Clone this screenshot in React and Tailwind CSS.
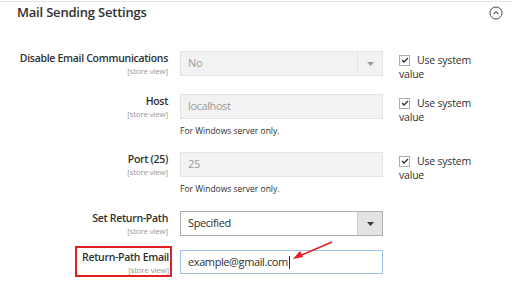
const font = "font-['Open_Sans',sans-serif]";

function Label({ title, boxed }) {
  return (
    <div className="w-[168px] shrink-0 flex justify-end">
      <div
        className={
          boxed
            ? "flex flex-col items-end border-2 border-[#e02020] pl-[5px] pr-[1px] pt-[2px] -mt-[4px] -mr-[4px] h-[31px]"
            : "flex flex-col items-end"
        }
      >
        <div className="text-[10.5px] leading-[14px] tracking-[-0.3px] font-semibold text-[#303030]">{title}</div>
        <div className="text-[8px] leading-[11px] tracking-[-0.2px] text-[#999]">[store view]</div>
      </div>
    </div>
  );
}

function Check() {
  return (
    <div className="ml-[16px] w-[110px] h-[25px] text-[10.5px] leading-[14px] tracking-[-0.2px] text-[#303030] pt-[2px]">
      <div className="flex items-center">
        <span className="w-[11px] h-[11px] border border-[#adadad] bg-white flex items-center justify-center mr-[7px]">
          <svg width="8" height="6" viewBox="0 0 8 6">
            <path d="M1 3l2 2 4-4" stroke="#303030" strokeWidth="1.3" fill="none" />
          </svg>
        </span>
        Use system
      </div>
      <div>value</div>
    </div>
  );
}

function Arrow({ dark }) {
  return (
    <div
      className={`w-[25px] self-stretch flex items-center justify-center border-l ${
        dark ? "bg-[#e3e3e3] border-[#cfcfcf]" : "border-[#e3e3e3]"
      }`}
    >
      <svg width="7" height="4" viewBox="0 0 7 4">
        <path d="M0 0h7L3.5 4z" fill={dark ? "#41362f" : "#9a9a9a"} />
      </svg>
    </div>
  );
}

export default function App() {
  return (
    <div className={`w-[512px] h-[290px] bg-white overflow-hidden ${font}`}>
      <div className="border-t border-[#e3e3e3] mt-[1px] flex items-center justify-between pl-[17px] pr-[9px] h-[22px]">
        <div className="text-[13px] tracking-[-0.2px] font-semibold text-[#303030]">Mail Sending Settings</div>
        <svg width="14" height="14" viewBox="0 0 14 14">
          <circle cx="7" cy="7" r="6" stroke="#514943" strokeWidth="1" fill="none" />
          <path d="M4.5 8.2L7 5.7l2.5 2.5" stroke="#514943" strokeWidth="1.1" fill="none" />
        </svg>
      </div>

      {/* Disable Email Communications */}
      <div className="flex items-start h-[25px] mt-[28px]">
        <Label title="Disable Email Communications" />
        <div className="ml-[12px] w-[203px] h-[25px] flex items-center bg-[#f2f2f2] border border-[#e3e3e3]">
          <div className="flex-1 pl-[7px] text-[11px] tracking-[-0.4px] text-[#9a9a9a]">No</div>
          <Arrow />
        </div>
        <Check />
      </div>

      {/* Host */}
      <div className="flex items-start h-[43px] mt-[18px]">
        <Label title="Host" />
        <div className="ml-[12px] w-[203px]">
          <div className="h-[25px] flex items-center bg-[#f2f2f2] border border-[#e3e3e3] pl-[7px] text-[11px] tracking-[-0.4px] text-[#9a9a9a]">localhost</div>
          <div className="text-[8.5px] leading-[12px] text-[#303030] mt-[6px]">For Windows server only.</div>
        </div>
        <Check />
      </div>

      {/* Port */}
      <div className="flex items-start h-[43px] mt-[15px]">
        <Label title="Port (25)" />
        <div className="ml-[12px] w-[203px]">
          <div className="h-[25px] flex items-center bg-[#f2f2f2] border border-[#e3e3e3] pl-[7px] text-[11px] tracking-[-0.4px] text-[#9a9a9a]">25</div>
          <div className="text-[8.5px] leading-[12px] text-[#303030] mt-[6px]">For Windows server only.</div>
        </div>
        <Check />
      </div>

      {/* Set Return-Path */}
      <div className="flex items-start h-[25px] mt-[16px]">
        <Label title="Set Return-Path" />
        <div className="ml-[12px] w-[203px] h-[25px] flex items-center bg-white border border-[#adadad]">
          <div className="flex-1 pl-[7px] text-[11px] tracking-[-0.4px] text-[#303030]">Specified</div>
          <Arrow dark />
        </div>
      </div>

      {/* Return-Path Email */}
      <div className="relative flex items-start mt-[14px]">
        <Label title="Return-Path Email" boxed />
        <div className="ml-[12px] w-[203px] h-[24px] flex items-center bg-white border border-[#9fc2ea] pl-[7px] text-[11px] tracking-[-0.4px] text-[#303030]">
          example@gmail.com<span className="inline-block w-px h-[13px] bg-[#303030] ml-[1px]" />
        </div>
        <svg className="absolute left-[288px] top-[-10px]" width="50" height="22" viewBox="0 0 50 22">
          <path d="M44 2L9 17" stroke="#e81c1c" strokeWidth="1.5" fill="none" />
          <path d="M5 19l7-8 3 6z" fill="#e81c1c" />
        </svg>
      </div>
    </div>
  );
}
